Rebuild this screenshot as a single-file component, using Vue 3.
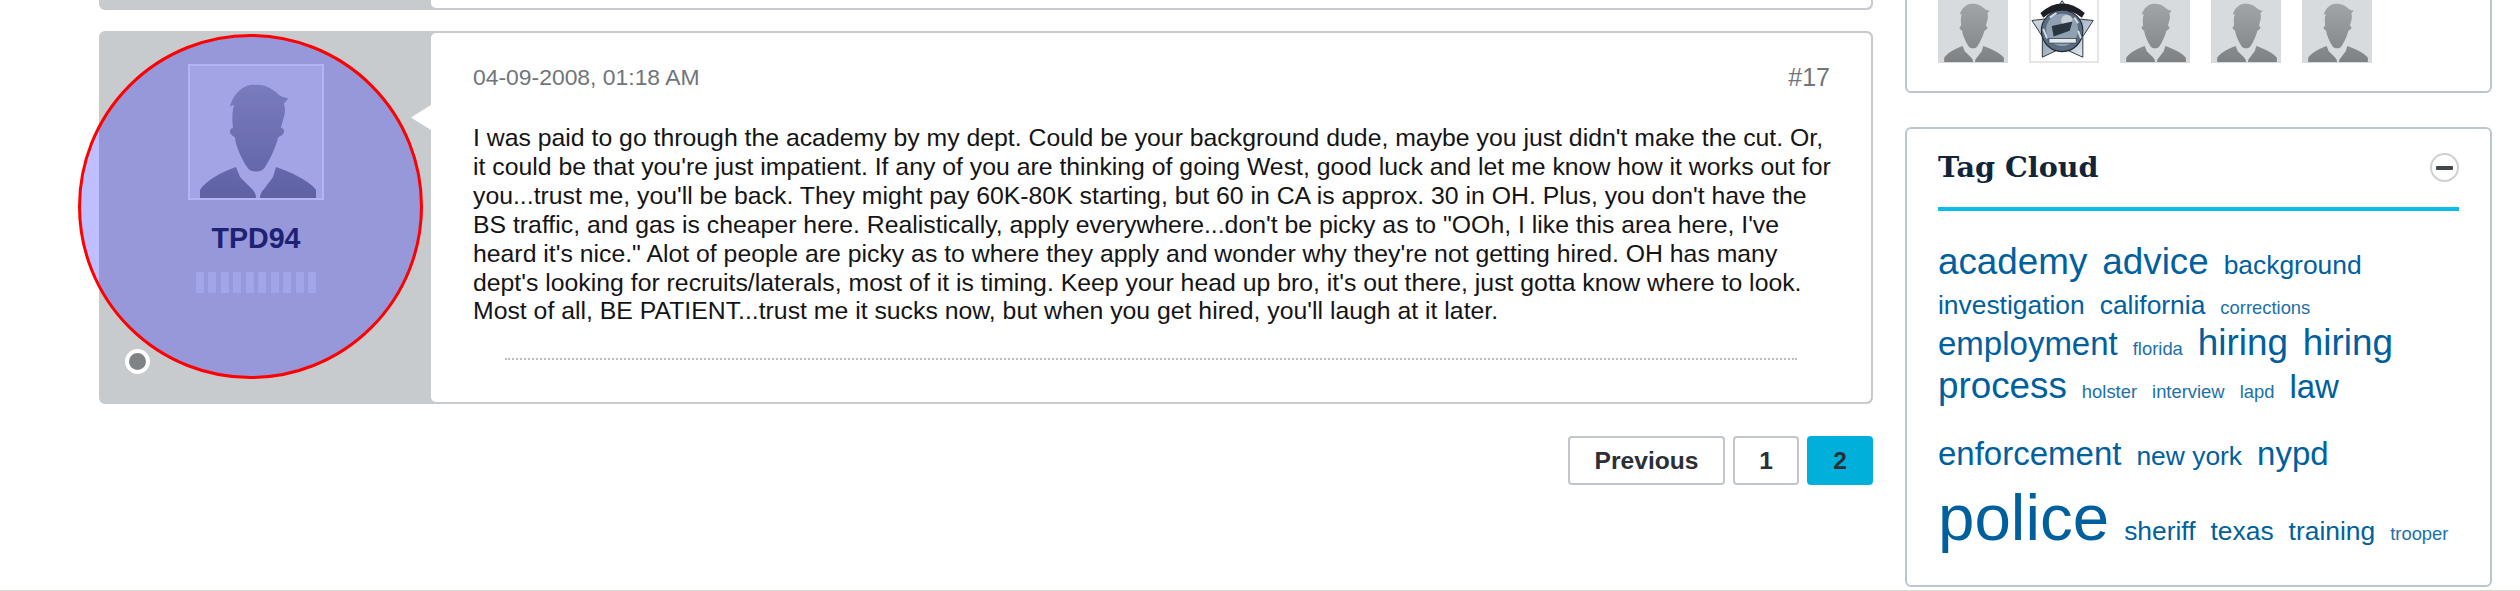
<template>
  <div class="page">
    <div class="main">
      <div class="post-stub"><div class="stub-body"></div></div>

      <div class="post">
        <div class="user-panel">
          <div class="avatar big">
            <svg viewBox="2 2 132 132" width="132" height="132">
              <path :d="personPath" fill="url(#personFill)" />
            </svg>
          </div>
          <div class="username">TPD94</div>
          <div class="rank">
            <span v-for="n in 10" :key="n" class="rank-bar"></span>
          </div>
          <span class="status-dot"></span>
        </div>

        <div class="post-body">
          <span class="notch"></span>
          <div class="post-head">
            <span class="post-date">04-09-2008, 01:18 AM</span>
            <span class="post-num">#17</span>
          </div>
          <p class="post-text">{{ postText }}</p>
          <div class="signature"></div>
        </div>

        <div class="highlight"></div>
      </div>

      <div class="pager">
        <a class="page-btn prev">Previous</a>
        <a class="page-btn num">1</a>
        <a class="page-btn num active">2</a>
      </div>
    </div>

    <div class="sidebar">
      <div class="side-box members">
        <div v-for="(m, i) in members" :key="i" class="member" :class="{ badge: m === 'badge' }">
          <svg v-if="m === 'person'" viewBox="0 0 136 136" width="70" height="70">
            <path :d="personPath" fill="url(#personFill)" />
          </svg>
          <svg v-else viewBox="0 0 70 70" width="66" height="66">
            <defs>
              <linearGradient id="starFill" x1="0" y1="0" x2="1" y2="1">
                <stop offset="0" stop-color="#f7f9fb" />
                <stop offset="0.5" stop-color="#9aabbc" />
                <stop offset="1" stop-color="#f2f5f8" />
              </linearGradient>
            </defs>
            <path d="M1 27 L20 25 L33 6 L46 25 L66 27 L55 44 L55 66 L33 56 L12 66 L12 44 Z" fill="url(#starFill)" stroke="#27303c" stroke-width="1" />
            <circle cx="33" cy="38" r="22" fill="#5a6c80" stroke="#1f2833" stroke-width="1.2" />
            <circle cx="33" cy="37" r="17" fill="#8fa0b2" />
            <circle cx="38" cy="27" r="6" fill="#c7d0d9" />
            <path d="M22 33 L44 28 L41 38 L24 44 Z" fill="#2a3542" />
            <path d="M20 24 L27 19 M46 24 L50 30 M13 36 L17 46 M50 38 L53 46" stroke="#d5dde5" stroke-width="2" />
            <rect x="19" y="46" width="29" height="5" fill="#e3e9ee" stroke="#2d3846" stroke-width="0.8" />
            <path d="M10 19 Q33 -1 57 19 L54 24 Q33 8 13 24 Z" fill="#1c2026" />
          </svg>
        </div>
      </div>

      <div class="side-box tags">
        <div class="tags-head">
          <h3 class="tags-title">Tag Cloud</h3>
          <span class="collapse"><i></i></span>
        </div>
        <div class="tag-cloud">
          <div v-for="(row, i) in tagRows" :key="i" class="tag-row">
            <a v-for="tag in row" :key="tag[0]" class="tag" :class="tag[1]">{{ tag[0] }}</a>
          </div>
        </div>
      </div>
    </div>

    <svg class="defs" width="0" height="0">
      <defs>
        <linearGradient id="personFill" x1="0" y1="0" x2="0" y2="1">
          <stop offset="0" stop-color="#a2a5a8" />
          <stop offset="1" stop-color="#7f8285" />
        </linearGradient>
      </defs>
    </svg>
  </div>
</template>

<script setup>
const personPath =
  'M68 21 C61 20 55 23 51 27 C46 31 43 38 42 43 C43 42 44 41 46 41 C44 48 44 56 45 64 C42 64 41 68 43 70 C44 72 46 72 47 74 C48 82 53 94 59 103 C62 109 74 109 77 103 C83 94 88 82 90 74 C91 72 94 72 95 70 C97 68 96 64 93 64 C94 58 97 52 97 46 C97 43 96 41 96 39 C98 38 99 36 100 34 C97 34 94 33 91 31 C85 25 76 20 68 21 Z ' +
  'M48 103 L52 113 L64 125 C67 128 68 131 68 134 L12 134 L12 126 C18 116 34 108 48 103 Z ' +
  'M88 103 C102 108 121 116 128 126 L128 134 L72 134 C72 131 73 128 76 125 L85 113 Z'

const postText =
  "I was paid to go through the academy by my dept. Could be your background dude, maybe you just didn't make the cut. Or, it could be that you're just impatient. If any of you are thinking of going West, good luck and let me know how it works out for you...trust me, you'll be back. They might pay 60K-80K starting, but 60 in CA is approx. 30 in OH. Plus, you don't have the BS traffic, and gas is cheaper here. Realistically, apply everywhere...don't be picky as to \"OOh, I like this area here, I've heard it's nice.\" Alot of people are picky as to where they apply and wonder why they're not getting hired. OH has many dept's looking for recruits/laterals, most of it is timing. Keep your head up bro, it's out there, just gotta know where to look. Most of all, BE PATIENT...trust me it sucks now, but when you get hired, you'll laugh at it later."

const members = ['person', 'badge', 'person', 'person', 'person']

const tagRows = [
  [['academy', 'xl'], ['advice', 'xl'], ['background', 'md']],
  [['investigation', 'md'], ['california', 'md'], ['corrections', 'sm']],
  [['employment', 'lg'], ['florida', 'sm'], ['hiring', 'xl'], ['hiring ', 'xl']],
  [['process', 'xl'], ['holster', 'sm'], ['interview', 'sm'], ['lapd', 'sm'], ['law', 'lg']],
  [['enforcement', 'lg'], ['new york', 'md'], ['nypd', 'lg']],
  [['police', 'xxl'], ['sheriff', 'md'], ['texas', 'md'], ['training', 'md'], ['trooper', 'sm']]
]
</script>

<style>
html, body {
  background: #fff;
}
</style>

<style scoped>
.page {
  display: flex;
  gap: 32px;
  height: 590px;
  overflow: hidden;
  padding-left: 99px;
  border-bottom: 1px solid #d9d9d2;
  font-family: "Liberation Sans", Arial, sans-serif;
  color: #1a1a1a;
}
.main {
  width: 1774px;
  flex: none;
}
.post-stub {
  height: 10px;
  margin-bottom: 21px;
  padding-left: 332px;
  background: #c8cbce;
  border-radius: 0 0 6px 6px;
}
.stub-body {
  height: 8px;
  margin-right: 2px;
  background: #fff;
  border-radius: 0 0 5px 5px;
}
.post {
  position: relative;
  display: flex;
  height: 369px;
  border: 2px solid #c8cbce;
  border-radius: 6px;
  background: #c8cbce;
}
.user-panel {
  width: 330px;
  flex: none;
  display: flex;
  flex-direction: column;
  align-items: center;
  padding: 31px 20px 28px 0;
  box-sizing: border-box;
}
.avatar.big {
  width: 136px;
  height: 136px;
  box-sizing: border-box;
  border: 2px solid #f0f2f3;
  background: #d8dbde;
}
.avatar svg, .member svg {
  display: block;
}
.username {
  margin-top: 22px;
  font-size: 28.6px;
  line-height: 32px;
  font-weight: bold;
  color: #2a2d43;
}
.rank {
  display: flex;
  gap: 4.2px;
  margin-top: 18px;
}
.rank-bar {
  width: 8.3px;
  height: 21px;
  background: #d9dcdf;
}
.status-dot {
  width: 25px;
  height: 25px;
  box-sizing: border-box;
  margin-top: auto;
  margin-left: 24px;
  align-self: flex-start;
  border: 4px solid #fff;
  border-radius: 50%;
  background: #7f8386;
}
.post-body {
  position: relative;
  flex: 1;
  padding: 29px 41px 0 42px;
  background: #fff;
  border-radius: 5px;
}
.notch {
  position: absolute;
  left: -20px;
  top: 72px;
  width: 20px;
  height: 25px;
  background: #fff;
  clip-path: polygon(100% 0, 0 50%, 100% 100%);
}
.post-head {
  display: flex;
  justify-content: space-between;
  align-items: center;
  height: 30px;
  color: #6f7579;
}
.post-date {
  font-size: 22.9px;
}
.post-num {
  font-size: 25px;
}
.post-text {
  margin: 32px -6px 0 0;
  font-size: 24.8px;
  line-height: 28.9px;
  color: #141414;
}
.signature {
  margin: 32px 33px 0 32px;
  border-top: 2px dotted #bdbdbd;
}
.highlight {
  position: absolute;
  left: -23px;
  top: 1px;
  width: 345px;
  height: 345px;
  box-sizing: border-box;
  border: 3px solid #f00;
  border-radius: 50%;
  background: rgba(0, 0, 255, 0.25);
}
.pager {
  display: flex;
  justify-content: flex-end;
  gap: 8px;
  margin-top: 32px;
}
.page-btn {
  height: 49px;
  box-sizing: border-box;
  display: flex;
  align-items: center;
  justify-content: center;
  border: 2px solid #c0c6cb;
  border-radius: 4px;
  font-size: 24.6px;
  font-weight: bold;
  color: #2b2f36;
}
.prev {
  width: 157px;
}
.num {
  width: 66px;
}
.active {
  background: #00b0da;
  border-color: #00b0da;
}
.sidebar {
  width: 587px;
  flex: none;
}
.side-box {
  box-sizing: border-box;
  border: 2px solid #bcc7cb;
  border-radius: 6px;
  padding: 0 31px;
}
.members {
  display: flex;
  gap: 21px;
  height: 113px;
  margin-top: -20px;
  padding-top: 10.5px;
  margin-bottom: 34px;
}
.member {
  width: 70px;
  height: 70px;
  background: #d8dbde;
}
.member.badge {
  box-sizing: border-box;
  border: 2px solid #e3e5e6;
  background: #fff;
}
.tags {
  height: 460px;
  padding-top: 24px;
}
.tags-head {
  display: flex;
  justify-content: space-between;
  align-items: center;
  height: 29px;
  padding-bottom: 25px;
  border-bottom: 4px solid #0bbde8;
}
.tags-title {
  margin: -2px 0 0;
  font-family: "DejaVu Serif", serif;
  font-size: 28.6px;
  font-weight: bold;
  color: #10243a;
}
.collapse {
  width: 29px;
  height: 29px;
  box-sizing: border-box;
  display: flex;
  align-items: center;
  justify-content: center;
  border: 2px solid #cfd0d0;
  border-radius: 50%;
}
.collapse i {
  width: 17px;
  height: 4px;
  border-radius: 1px;
  background: #42484c;
}
.tag-cloud {
  padding-top: 31px;
}
.tag-row {
  display: flex;
  align-items: baseline;
  gap: 15px;
  height: 42.5px;
  line-height: 40px;
  white-space: nowrap;
  color: #00609e;
}
.tag-row:nth-child(2) {
  height: 38px;
}
.tag-row:nth-child(3) {
  height: 43.5px;
}
.tag-row:nth-child(4) {
  height: 67.5px;
}
.tag-row:nth-child(5) {
  height: 64px;
}
.tag.sm {
  font-size: 18.4px;
  color: #1d70a8;
}
.tag.md {
  font-size: 26.4px;
}
.tag.lg {
  font-size: 33px;
}
.tag.xl {
  font-size: 36.8px;
}
.tag.xxl {
  font-size: 65.5px;
}
.defs {
  position: absolute;
}
</style>
